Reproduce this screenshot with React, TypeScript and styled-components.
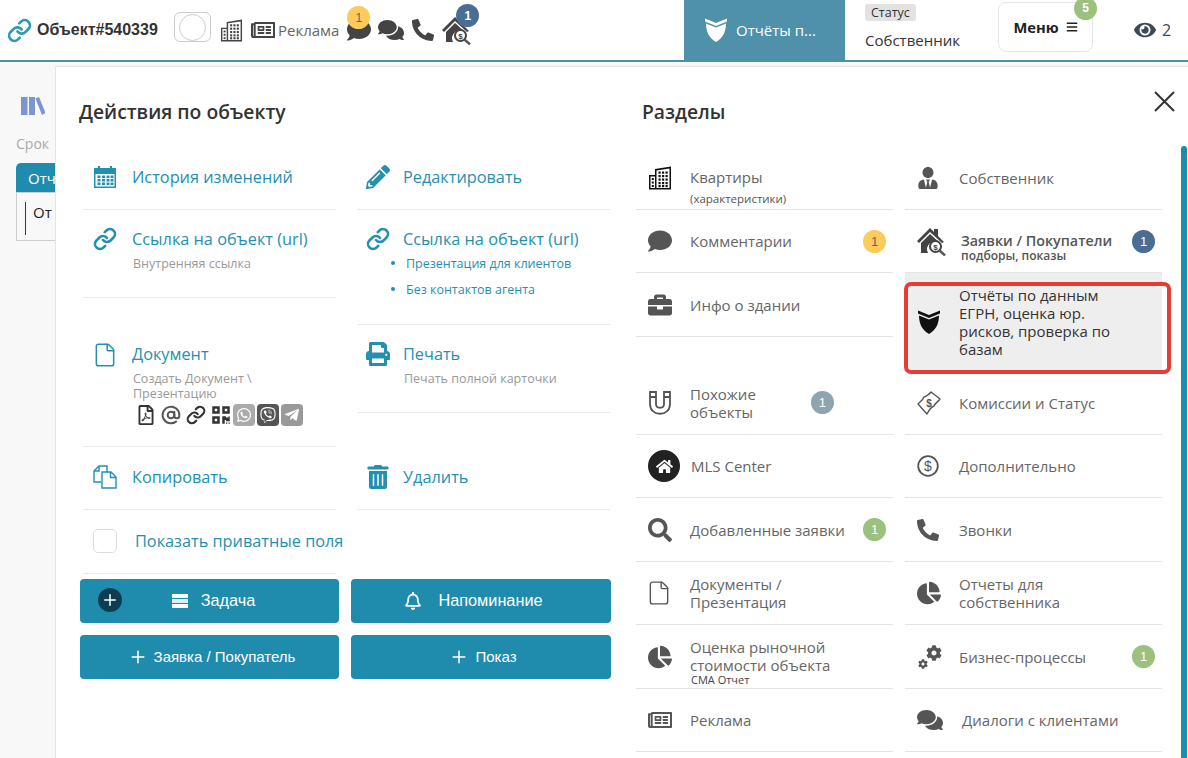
import React from 'react';
import styled, { createGlobalStyle } from 'styled-components';
import {
  FaBars,
  FaBriefcase,
  FaChartPie,
  FaCog,
  FaComment,
  FaComments,
  FaEye,
  FaHome,
  FaPencilAlt,
  FaPhoneAlt,
  FaPrint,
  FaQrcode,
  FaRegBell,
  FaRegFilePdf,
  FaRegNewspaper,
  FaSearch,
  FaTelegramPlane,
  FaTrashAlt,
  FaUserTie,
  FaViber,
  FaWhatsapp,
} from 'react-icons/fa';
import { AtSign, File as FileIcon, Link as ChainIcon, Plus } from 'lucide-react';

const TEAL = '#2490b0';
const BUTTON = '#1f8cad';
const STEEL = '#4f91aa';
const GREY_TEXT = '#666';
const ICON_GREY = '#555';

const GlobalStyle = createGlobalStyle`
  html, body {
    margin: 0;
    height: 100%;
    overflow: hidden;
    background: #f8f8f8;
    font-family: "Open Sans", "Liberation Sans", sans-serif;
  }
  #root { height: 100%; }
`;

function ShieldIcon({ color, size = 24 }: { color: string; size?: number }) {
  return (
    <svg width={size} height={size} viewBox="0 0 24 24" fill={color}>
      <path d="M1 0.5 L12 5 L23 0.5 L23 3.5 L12 8 L1 3.5 Z" />
      <path d="M2 5.5 L12 9.5 L22 5.5 C22 14 18.5 20.5 12 24 C5.5 20.5 2 14 2 5.5 Z" />
    </svg>
  );
}

function HouseSearchIcon({ size = 30 }: { size?: number }) {
  return (
    <svg width={size} height={size} viewBox="0 0 30 30">
      <path d="M0 15 L13 2 L17 6 L17 3 L21 3 L21 10 L27 16 L25 17 L13 6 L2 17 Z" fill="#444" />
      <path d="M4 17 L13 8 L23 17 A8 8 0 0 0 11 27 L4 27 Z" fill="#444" />
      <circle cx="18.5" cy="20.5" r="5.5" fill="#fff" stroke="#444" strokeWidth="2" />
      <path d="M22.5 24.5 L28 29.5" stroke="#555" strokeWidth="2.4" />
      <text x="18.5" y="23.5" fontSize="8" textAnchor="middle" fill="#444" fontFamily="Liberation Sans" fontWeight="700">$</text>
    </svg>
  );
}

function BuildingIcon({ color = '#444', size = 24 }: { color?: string; size?: number }) {
  return (
    <svg width={size} height={size} viewBox="0 0 24 24" fill={color}>
      <path d="M1 9 H7 V3 L23 0.5 V23.5 H1 Z M2.5 10.5 V22 H7 V10.5 Z M8.5 4.5 V22 H21.5 V2.5 Z" />
      {[10.5, 14, 17.5].flatMap((x) =>
        [5.5, 9, 12.5, 16, 19].map((y) => <rect key={`${x}-${y}`} x={x} y={y} width="2.2" height="2.2" />)
      )}
      {[12, 15.5, 19].map((y) => (
        <rect key={y} x="3.8" y={y} width="2" height="2" />
      ))}
    </svg>
  );
}

function CalendarIcon() {
  return (
    <svg width="24" height="24" viewBox="0 0 24 24" fill={TEAL}>
      <path d="M1 3 H5 V1 H7 V3 H17 V1 H19 V3 H23 V23 H1 Z M2.5 9 V21.5 H21.5 V9 Z" />
      {[6, 10.5, 15, 19].flatMap((x) =>
        [11, 14.5, 18].map((y) => <rect key={`${x}-${y}`} x={x - 1.5} y={y - 0.5} width="3" height="2.5" />)
      )}
    </svg>
  );
}

function CopyIcon() {
  return (
    <svg width="24" height="24" viewBox="0 0 24 24" fill="none" stroke={TEAL} strokeWidth="1.4">
      <path d="M8 17 H1 V6 L6 1 H14 V7" />
      <path d="M6 1 V6 H1" />
      <path d="M9 7 H18 L23 12 V23 H9 Z" />
      <path d="M17.5 7 V12.5 H23" />
    </svg>
  );
}

function MagnetIcon() {
  return (
    <svg width="24" height="26" viewBox="0 0 24 26" fill="none" stroke={ICON_GREY} strokeWidth="1.8">
      <path d="M2 2 H8 V14 C8 19 16 19 16 14 V2 H22 V14 C22 27 2 27 2 14 Z" />
      <path d="M2 7 H8 M16 7 H22" />
    </svg>
  );
}

function MoneyIcon() {
  return (
    <svg width="24" height="24" viewBox="0 0 24 24" fill="none" stroke={ICON_GREY} strokeWidth="1.4">
      <path d="M1 13 C3 11 6 9 7 6 C9 5 12 4 14 1 L23 8 C21 11 18 12 17 15 C14 16 12 19 10 23 Z" strokeLinejoin="round" />
      <text x="12" y="15.5" fontSize="10" textAnchor="middle" fill={ICON_GREY} stroke="none" fontFamily="Liberation Sans" fontWeight="700">$</text>
    </svg>
  );
}

function DollarIcon() {
  return (
    <svg width="22" height="22" viewBox="0 0 22 22">
      <circle cx="11" cy="11" r="9.8" fill="none" stroke={ICON_GREY} strokeWidth="1.8" />
      <text x="11" y="16" fontSize="14" textAnchor="middle" fill={ICON_GREY} fontFamily="Liberation Sans">$</text>
    </svg>
  );
}

function BooksIcon() {
  return (
    <svg width="24" height="20" viewBox="0 0 24 20" fill="#7b96cf">
      <rect x="0" y="1" width="6.5" height="18" />
      <rect x="8" y="1" width="6" height="18" />
      <path d="M14.5 2.5 L18 1 L24.5 17 L21 19 Z" />
    </svg>
  );
}

function StackIcon() {
  return (
    <svg width="16" height="14" viewBox="0 0 16 14" fill="#fff">
      <rect width="16" height="4" />
      <rect y="5" width="16" height="4" opacity="0.85" />
      <rect y="10" width="16" height="4" />
    </svg>
  );
}

const Page = styled.div`
  position: relative;
  height: 100%;
  overflow: hidden;
`;

const Header = styled.header`
  display: flex;
  align-items: center;
  height: 60px;
  padding-left: 7px;
  background: #fff;
  border-bottom: 2px solid ${STEEL};
`;

const LinkMark = styled(ChainIcon)`
  width: 25px;
  height: 25px;
  color: #2e9aae;
  margin-right: 5px;
  stroke-width: 2.6;
`;

const ObjectTitle = styled.span`
  font-family: "Liberation Sans", Arial, sans-serif;
  font-weight: 700;
  font-size: 16px;
  color: #333;
  width: 137px;
`;

const ToggleBox = styled.div`
  display: flex;
  align-items: center;
  justify-content: center;
  width: 37px;
  height: 30px;
  margin: -6px 9px 0 0;
  box-sizing: border-box;
  border: 1px solid #ccc;
  border-radius: 6px;
`;

const ToggleCircle = styled.span`
  width: 25px;
  height: 25px;
  border: 1px solid #ccc;
  border-radius: 50%;
`;

const HeaderIcon = styled.span<{ $gap?: number; $size?: number }>`
  position: relative;
  display: flex;
  align-items: center;
  justify-content: center;
  margin-right: ${(p) => p.$gap ?? 7}px;
  color: #444;
  font-size: ${(p) => p.$size ?? 24}px;
`;

const AdLabel = styled.span`
  font-size: 15px;
  color: ${GREY_TEXT};
  margin-right: 8px;
`;

const TopBadge = styled.span<{ $bg: string; $right: number; $top: number }>`
  position: absolute;
  right: ${(p) => p.$right}px;
  top: ${(p) => p.$top}px;
  display: flex;
  align-items: center;
  justify-content: center;
  width: 23px;
  height: 23px;
  border-radius: 50%;
  background: ${(p) => p.$bg};
  color: #fff;
  font-family: "Liberation Sans", Arial, sans-serif;
  font-size: 12px;
  font-weight: 700;
`;

const DarkDigit = styled.span`
  color: #666;
  font-weight: 400;
`;

const ReportsTab = styled.div`
  display: flex;
  align-items: center;
  gap: 8px;
  width: 161px;
  height: 60px;
  margin-left: auto;
  padding-left: 20px;
  box-sizing: border-box;
  background: ${STEEL};
  color: #fff;
  font-size: 15px;
`;

const StatusBlock = styled.div`
  display: flex;
  flex-direction: column;
  align-items: flex-start;
  gap: 9px;
  width: 153px;
  height: 60px;
  padding: 4px 0 0 20px;
  box-sizing: border-box;
`;

const StatusTag = styled.span`
  padding: 0 6px;
  background: #e2e2e2;
  border-radius: 3px;
  font-size: 12.5px;
  line-height: 17px;
  color: #333;
`;

const StatusValue = styled.span`
  font-size: 15px;
  line-height: 20px;
  color: #333;
`;

const MenuButton = styled.div`
  position: relative;
  display: flex;
  align-items: center;
  justify-content: center;
  gap: 7px;
  width: 95px;
  height: 50px;
  margin: -7px 0 0;
  box-sizing: border-box;
  border: 1px solid #e6e6e6;
  border-radius: 8px;
  font-size: 14.7px;
  font-weight: 700;
  color: #222;
`;

const EyeBlock = styled.div`
  display: flex;
  align-items: center;
  gap: 6px;
  margin-left: 41px;
  width: 54px;
  color: #3c4858;
  font-size: 16px;
`;

const BackdropContent = styled.div`
  padding: 34px 0 0 16px;
`;

const BooksMark = styled.div`
  margin-left: 5px;
  height: 20px;
`;

const FadedLabel = styled.div`
  margin-top: 18px;
  font-size: 14px;
  line-height: 20px;
  color: #aaa;
`;

const BackTab = styled.div`
  width: 60px;
  height: 29px;
  margin-top: 9px;
  padding: 5px 0 0 12px;
  box-sizing: border-box;
  background: ${BUTTON};
  border-radius: 5px 5px 0 0;
  color: #fff;
  font-size: 15px;
`;

const BackCell = styled.div`
  width: 60px;
  height: 49px;
  box-sizing: border-box;
  padding: 9px 0 0 8px;
  border: 1px solid #ccc;
  font-size: 15px;
  color: #222;
`;

const BackCellText = styled.div`
  height: 33px;
  padding-left: 7px;
  border-left: 1px solid #7a1f1f;
`;

const Panel = styled.section`
  position: absolute;
  left: 55px;
  top: 66px;
  right: 0;
  bottom: 0;
  display: flex;
  box-sizing: border-box;
  background: #fff;
  border-left: 1px solid #e4e4e4;
  border-top: 1px solid #e4e4e4;
  overflow: hidden;
`;

const CloseButton = styled.div`
  position: absolute;
  top: 24px;
  right: 13px;
  line-height: 0;
`;

const ScrollThumb = styled.div`
  position: absolute;
  top: 79px;
  right: 1px;
  bottom: 0;
  width: 6px;
  border-radius: 3px 3px 0 0;
  background: ${BUTTON};
`;

const ActionsSide = styled.div`
  width: 580px;
  padding: 0 0 0 24px;
  box-sizing: border-box;
`;

const SectionsSide = styled.div`
  width: 540px;
`;

const SideTitle = styled.h2<{ $left?: number }>`
  margin: 0;
  height: 79px;
  padding: 32px 0 0 ${(p) => p.$left ?? 0}px;
  box-sizing: border-box;
  font-size: 19.3px;
  font-weight: 600;
  line-height: 26px;
  color: #333;
  margin-left: -1px;
`;

const ActionColumns = styled.div`
  display: flex;
  gap: 21px;
  padding-left: 3px;
`;

const ActionColumn = styled.div`
  display: flex;
  flex-direction: column;
  width: 253px;
`;

const ActionRow = styled.div<{ $h: number; $top: number; $plain?: boolean }>`
  display: flex;
  height: ${(p) => p.$h}px;
  padding: ${(p) => p.$top}px 0 0 10px;
  box-sizing: border-box;
  border-bottom: ${(p) => (p.$plain ? 'none' : '1px solid #eaeaea')};
`;

const ActionIcon = styled.span`
  display: flex;
  justify-content: flex-start;
  width: 40px;
  height: 24px;
  color: ${TEAL};
  font-size: 24px;
`;

const NarrowActionIcon = styled(ActionIcon)`
  width: 38px;
  margin-left: -1px;
`;

const ActionBody = styled.div`
  flex: 1;
  min-width: 0;
`;

const ActionTitle = styled.div`
  font-size: 16.3px;
  line-height: 24px;
  color: ${TEAL};
  white-space: nowrap;
  margin-left: -1px;
`;

const ActionHint = styled.div`
  margin-top: 5px;
  font-size: 12.5px;
  line-height: 15px;
  color: #999;
`;

const SubLinks = styled.ul`
  margin: -1px 0 0;
  padding: 0;
  list-style: none;
`;

const SubLink = styled.li`
  display: flex;
  align-items: center;
  height: 26px;
  font-size: 12.5px;
  color: ${TEAL};

  &::before {
    content: '';
    width: 4px;
    height: 4px;
    margin: 0 11px 0 -13px;
    border-radius: 50%;
    background: ${TEAL};
  }
`;

const ShareIcons = styled.div`
  display: flex;
  align-items: center;
  gap: 5px;
  height: 24px;
  margin: 2px 0 0 3px;
  color: #333;
  font-size: 20px;
`;

const ShareTile = styled.span<{ $bg: string }>`
  display: flex;
  align-items: center;
  justify-content: center;
  width: 22px;
  height: 22px;
  margin-left: -3px;
  border-radius: 4px;
  background: ${(p) => p.$bg};
  color: #fff;
  font-size: 16px;
`;

const CheckBox = styled.span`
  width: 24px;
  height: 24px;
  margin-right: 19px;
  box-sizing: border-box;
  border: 1px solid #ddd;
  border-radius: 5px;
  flex: none;
`;

const ButtonGrid = styled.div`
  display: grid;
  grid-template-columns: 259px 260px;
  grid-auto-rows: 44px;
  gap: 12px;
  margin-top: 5px;
  width: 531px;
`;

const ActionButton = styled.div<{ $small?: boolean; $gap?: number; $pushLeft?: number; $pushRight?: number }>`
  position: relative;
  display: flex;
  align-items: center;
  justify-content: center;
  gap: ${(p) => p.$gap ?? (p.$small ? 6 : 13)}px;
  padding: 0 ${(p) => p.$pushRight ?? 0}px 1px ${(p) => p.$pushLeft ?? 0}px;
  background: ${BUTTON};
  border-radius: 4px;
  color: #fff;
  font-family: "Liberation Sans", Arial, sans-serif;
  font-size: ${(p) => (p.$small ? 15 : 16.3)}px;
`;

const AddCircle = styled.span`
  position: absolute;
  left: 18px;
  top: 9px;
  display: flex;
  align-items: center;
  justify-content: center;
  width: 24px;
  height: 24px;
  border-radius: 50%;
  background: #0d3d52;
`;

const SectionColumns = styled.div`
  display: flex;
  gap: 12px;
`;

const SectionColumn = styled.div`
  display: flex;
  flex-direction: column;
  width: 257px;
`;

const SectionRow = styled.div<{ $h: number; $top?: number }>`
  display: flex;
  align-items: center;
  flex: none;
  height: ${(p) => p.$h}px;
  padding-top: ${(p) => p.$top ?? 0}px;
  box-sizing: border-box;
  border-bottom: 1px solid #e4e4e4;
`;

const SectionIcon = styled.span<{ $offset?: number }>`
  display: flex;
  align-items: center;
  justify-content: flex-start;
  flex: none;
  width: 42px;
  margin-left: 12px;
  margin-top: ${(p) => p.$offset ?? 0}px;
  color: ${ICON_GREY};
  font-size: 24px;
`;

const SectionText = styled.div<{ $shift?: number; $down?: number }>`
  margin-left: ${(p) => p.$shift ?? 0}px;
  padding-top: ${(p) => p.$down ?? 0}px;
  font-size: 15px;
  line-height: 18px;
  color: ${GREY_TEXT};
`;

const SectionNote = styled.div`
  font-size: 11.5px;
  line-height: 16px;
  color: #555;
  margin-top: 5px;
`;

const TinyNote = styled.div`
  font-size: 11px;
  line-height: 12px;
  color: #444;
  margin-left: 1px;
`;

const StrongText = styled.div`
  font-size: 14.3px;
  font-weight: 600;
  line-height: 17px;
  color: #555;
`;

const StrongNote = styled.div`
  font-size: 12px;
  font-weight: 600;
  line-height: 13px;
  color: #555;
`;

const CountBadge = styled.span<{ $bg: string; $left?: number }>`
  display: flex;
  align-items: center;
  justify-content: center;
  flex: none;
  width: 23px;
  height: 23px;
  margin-left: ${(p) => (p.$left !== undefined ? `${p.$left}px` : 'auto')};
  margin-right: ${(p) => (p.$left !== undefined ? 0 : 7)}px;
  border-radius: 50%;
  background: ${(p) => p.$bg};
  color: #fff;
  font-family: "Liberation Sans", Arial, sans-serif;
  font-size: 13px;
`;

const HighlightWrap = styled.div`
  position: relative;
  flex: none;
  height: 98px;
`;

const HighlightRow = styled.div`
  display: flex;
  align-items: center;
  height: 98px;
  box-sizing: border-box;
  background: #eee;
`;

const HighlightText = styled.div`
  font-size: 15px;
  line-height: 18px;
  color: #333;
`;

const RedFrame = styled.div`
  position: absolute;
  left: -1px;
  right: -9px;
  top: 9px;
  height: 92px;
  box-sizing: border-box;
  border: 4px solid #e53c33;
  border-radius: 7px;
`;

const MlsBadge = styled.span`
  display: flex;
  align-items: center;
  justify-content: center;
  width: 32px;
  height: 32px;
  border-radius: 50%;
  background: #222;
  color: #fff;
  font-size: 17px;
`;

const CogPair = styled.span`
  display: flex;
  align-items: flex-end;
  gap: 0;
  height: 24px;
  font-size: 10px;
  margin-left: 1px;
`;

const BigCog = styled(FaCog)`
  font-size: 16px;
  margin: 0 0 8px -2px;
`;

export default function App() {
  return (
    <Page>
      <GlobalStyle />
      <Header>
        <LinkMark />
        <ObjectTitle>Объект#540339</ObjectTitle>
        <ToggleBox>
          <ToggleCircle />
        </ToggleBox>
        <HeaderIcon $gap={8}>
          <BuildingIcon size={23} />
        </HeaderIcon>
        <HeaderIcon $gap={3}>
          <FaRegNewspaper />
        </HeaderIcon>
        <AdLabel>Реклама</AdLabel>
        <HeaderIcon>
          <FaComment />
          <TopBadge $bg="#fdcb5c" $right={1} $top={-12}>
            <DarkDigit>1</DarkDigit>
          </TopBadge>
        </HeaderIcon>
        <HeaderIcon $gap={8} $size={26}>
          <FaComments />
        </HeaderIcon>
        <HeaderIcon $gap={8} $size={22}>
          <FaPhoneAlt />
        </HeaderIcon>
        <HeaderIcon $gap={0}>
          <HouseSearchIcon />
          <TopBadge $bg="#4a6d94" $right={-7} $top={-11}>
            1
          </TopBadge>
        </HeaderIcon>

        <ReportsTab>
          <ShieldIcon color="#fff" />
          Отчёты п...
        </ReportsTab>
        <StatusBlock>
          <StatusTag>Статус</StatusTag>
          <StatusValue>Собственник</StatusValue>
        </StatusBlock>
        <MenuButton>
          Меню <FaBars size={12} />
          <TopBadge $bg="#9cc17e" $right={-5} $top={-6}>
            5
          </TopBadge>
        </MenuButton>
        <EyeBlock>
          <FaEye size={22} />2
        </EyeBlock>
      </Header>

      <BackdropContent>
        <BooksMark>
          <BooksIcon />
        </BooksMark>
        <FadedLabel>Срок</FadedLabel>
        <BackTab>Отчёты</BackTab>
        <BackCell>
          <BackCellText>От</BackCellText>
        </BackCell>
      </BackdropContent>

      <Panel>
        <ActionsSide>
          <SideTitle>Действия по объекту</SideTitle>
          <ActionColumns>
            <ActionColumn>
              <ActionRow $h={64} $top={19}>
                <ActionIcon>
                  <CalendarIcon />
                </ActionIcon>
                <ActionBody>
                  <ActionTitle>История изменений</ActionTitle>
                </ActionBody>
              </ActionRow>
              <ActionRow $h={88} $top={17}>
                <ActionIcon>
                  <ChainIcon size={24} strokeWidth={2.6} />
                </ActionIcon>
                <ActionBody>
                  <ActionTitle>Ссылка на объект (url)</ActionTitle>
                  <ActionHint>Внутренняя ссылка</ActionHint>
                </ActionBody>
              </ActionRow>
              <ActionRow $h={149} $top={44}>
                <ActionIcon>
                  <FileIcon size={26} strokeWidth={1.4} style={{ marginLeft: -1 }} />
                </ActionIcon>
                <ActionBody>
                  <ActionTitle>Документ</ActionTitle>
                  <ActionHint>
                    Создать Документ \<br />
                    Презентацию
                  </ActionHint>
                  <ShareIcons>
                    <FaRegFilePdf />
                    <AtSign size={20} strokeWidth={2.4} color="#555" />
                    <ChainIcon size={20} strokeWidth={2.6} />
                    <FaQrcode />
                    <ShareTile $bg="#aaa">
                      <FaWhatsapp />
                    </ShareTile>
                    <ShareTile $bg="#555">
                      <FaViber />
                    </ShareTile>
                    <ShareTile $bg="#999">
                      <FaTelegramPlane />
                    </ShareTile>
                  </ShareIcons>
                </ActionBody>
              </ActionRow>
              <ActionRow $h={63} $top={18}>
                <ActionIcon>
                  <CopyIcon />
                </ActionIcon>
                <ActionBody>
                  <ActionTitle>Копировать</ActionTitle>
                </ActionBody>
              </ActionRow>
              <ActionRow $h={64} $top={19}>
                <CheckBox />
                <ActionBody>
                  <ActionTitle>Показать приватные поля</ActionTitle>
                </ActionBody>
              </ActionRow>
            </ActionColumn>
            <ActionColumn>
              <ActionRow $h={64} $top={19}>
                <NarrowActionIcon>
                  <FaPencilAlt />
                </NarrowActionIcon>
                <ActionBody>
                  <ActionTitle>Редактировать</ActionTitle>
                </ActionBody>
              </ActionRow>
              <ActionRow $h={115} $top={17}>
                <NarrowActionIcon>
                  <ChainIcon size={24} strokeWidth={2.6} />
                </NarrowActionIcon>
                <ActionBody>
                  <ActionTitle>Ссылка на объект (url)</ActionTitle>
                  <SubLinks>
                    <SubLink>Презентация для клиентов</SubLink>
                    <SubLink>Без контактов агента</SubLink>
                  </SubLinks>
                </ActionBody>
              </ActionRow>
              <ActionRow $h={88} $top={17}>
                <NarrowActionIcon>
                  <FaPrint />
                </NarrowActionIcon>
                <ActionBody>
                  <ActionTitle>Печать</ActionTitle>
                  <ActionHint>Печать полной карточки</ActionHint>
                </ActionBody>
              </ActionRow>
              <ActionRow $h={97} $top={52}>
                <NarrowActionIcon>
                  <FaTrashAlt />
                </NarrowActionIcon>
                <ActionBody>
                  <ActionTitle>Удалить</ActionTitle>
                </ActionBody>
              </ActionRow>
            </ActionColumn>
          </ActionColumns>
          <ButtonGrid>
            <ActionButton $pushLeft={8}>
              <AddCircle>
                <Plus size={18} color="#fff" />
              </AddCircle>
              <StackIcon />
              Задача
            </ActionButton>
            <ActionButton $pushRight={15} $gap={16}>
              <FaRegBell size={18} />
              Напоминание
            </ActionButton>
            <ActionButton $small $pushLeft={4}>
              <Plus size={20} strokeWidth={1.8} />
              Заявка / Покупатель
            </ActionButton>
            <ActionButton $small $pushLeft={4}>
              <Plus size={20} strokeWidth={1.8} />
              Показ
            </ActionButton>
          </ButtonGrid>
        </ActionsSide>

        <SectionsSide>
          <SideTitle $left={7}>Разделы</SideTitle>
          <SectionColumns>
            <SectionColumn>
              <SectionRow $h={64} $top={20}>
                <SectionIcon $offset={-20}>
                  <BuildingIcon color="#111" />
                </SectionIcon>
                <SectionText>
                  Квартиры
                  <SectionNote>(характеристики)</SectionNote>
                </SectionText>
              </SectionRow>
              <SectionRow $h={63}>
                <SectionIcon>
                  <FaComment />
                </SectionIcon>
                <SectionText>Комментарии</SectionText>
                <CountBadge $bg="#fdcb5c">
                  <DarkDigit>1</DarkDigit>
                </CountBadge>
              </SectionRow>
              <SectionRow $h={64}>
                <SectionIcon>
                  <FaBriefcase />
                </SectionIcon>
                <SectionText>Инфо о здании</SectionText>
              </SectionRow>
              <SectionRow $h={98} $top={34}>
                <SectionIcon>
                  <MagnetIcon />
                </SectionIcon>
                <SectionText>
                  Похожие
                  <br />
                  объекты
                </SectionText>
                <CountBadge $bg="#8fa3b0" $left={55}>
                  1
                </CountBadge>
              </SectionRow>
              <SectionRow $h={63}>
                <SectionIcon>
                  <MlsBadge>
                    <FaHome />
                  </MlsBadge>
                </SectionIcon>
                <SectionText $shift={1}>MLS Center</SectionText>
              </SectionRow>
              <SectionRow $h={64}>
                <SectionIcon>
                  <FaSearch />
                </SectionIcon>
                <SectionText>Добавленные заявки</SectionText>
                <CountBadge $bg="#9cc17e">1</CountBadge>
              </SectionRow>
              <SectionRow $h={63}>
                <SectionIcon>
                  <FileIcon size={26} strokeWidth={1.3} style={{ marginLeft: -2 }} />
                </SectionIcon>
                <SectionText>
                  Документы /<br />
                  Презентация
                </SectionText>
              </SectionRow>
              <SectionRow $h={64} $top={10}>
                <SectionIcon $offset={-10}>
                  <FaChartPie />
                </SectionIcon>
                <SectionText>
                  Оценка рыночной
                  <br />
                  стоимости объекта
                  <TinyNote>CMA Отчет</TinyNote>
                </SectionText>
              </SectionRow>
              <SectionRow $h={63}>
                <SectionIcon>
                  <FaRegNewspaper />
                </SectionIcon>
                <SectionText>Реклама</SectionText>
              </SectionRow>
            </SectionColumn>

            <SectionColumn>
              <SectionRow $h={64}>
                <SectionIcon>
                  <FaUserTie size={22} />
                </SectionIcon>
                <SectionText>Собственник</SectionText>
              </SectionRow>
              <SectionRow $h={63}>
                <SectionIcon>
                  <HouseSearchIcon />
                </SectionIcon>
                <SectionText $shift={2} $down={12}>
                  <StrongText>Заявки / Покупатели</StrongText>
                  <StrongNote>подборы, показы</StrongNote>
                </SectionText>
                <CountBadge $bg="#4a6d94">1</CountBadge>
              </SectionRow>
              <HighlightWrap>
                <HighlightRow>
                  <SectionIcon>
                    <ShieldIcon color="#111" />
                  </SectionIcon>
                  <HighlightText>
                    Отчёты по данным
                    <br />
                    ЕГРН, оценка юр.
                    <br />
                    рисков, проверка по
                    <br />
                    базам
                  </HighlightText>
                </HighlightRow>
                <RedFrame />
              </HighlightWrap>
              <SectionRow $h={64}>
                <SectionIcon>
                  <MoneyIcon />
                </SectionIcon>
                <SectionText>Комиссии и Статус</SectionText>
              </SectionRow>
              <SectionRow $h={63}>
                <SectionIcon>
                  <DollarIcon />
                </SectionIcon>
                <SectionText>Дополнительно</SectionText>
              </SectionRow>
              <SectionRow $h={64}>
                <SectionIcon>
                  <FaPhoneAlt size={22} />
                </SectionIcon>
                <SectionText>Звонки</SectionText>
              </SectionRow>
              <SectionRow $h={63}>
                <SectionIcon>
                  <FaChartPie />
                </SectionIcon>
                <SectionText>
                  Отчеты для
                  <br />
                  собственника
                </SectionText>
              </SectionRow>
              <SectionRow $h={64}>
                <SectionIcon>
                  <CogPair>
                    <FaCog />
                    <BigCog />
                  </CogPair>
                </SectionIcon>
                <SectionText>Бизнес-процессы</SectionText>
                <CountBadge $bg="#9cc17e">1</CountBadge>
              </SectionRow>
              <SectionRow $h={63}>
                <SectionIcon>
                  <FaComments size={26} />
                </SectionIcon>
                <SectionText $shift={3}>Диалоги с клиентами</SectionText>
              </SectionRow>
            </SectionColumn>
          </SectionColumns>
        </SectionsSide>

        <CloseButton>
          <svg width="21" height="21" viewBox="0 0 21 21" stroke="#333" strokeWidth="2">
            <path d="M1 1 L20 20 M20 1 L1 20" />
          </svg>
        </CloseButton>
        <ScrollThumb />
      </Panel>
    </Page>
  );
}
